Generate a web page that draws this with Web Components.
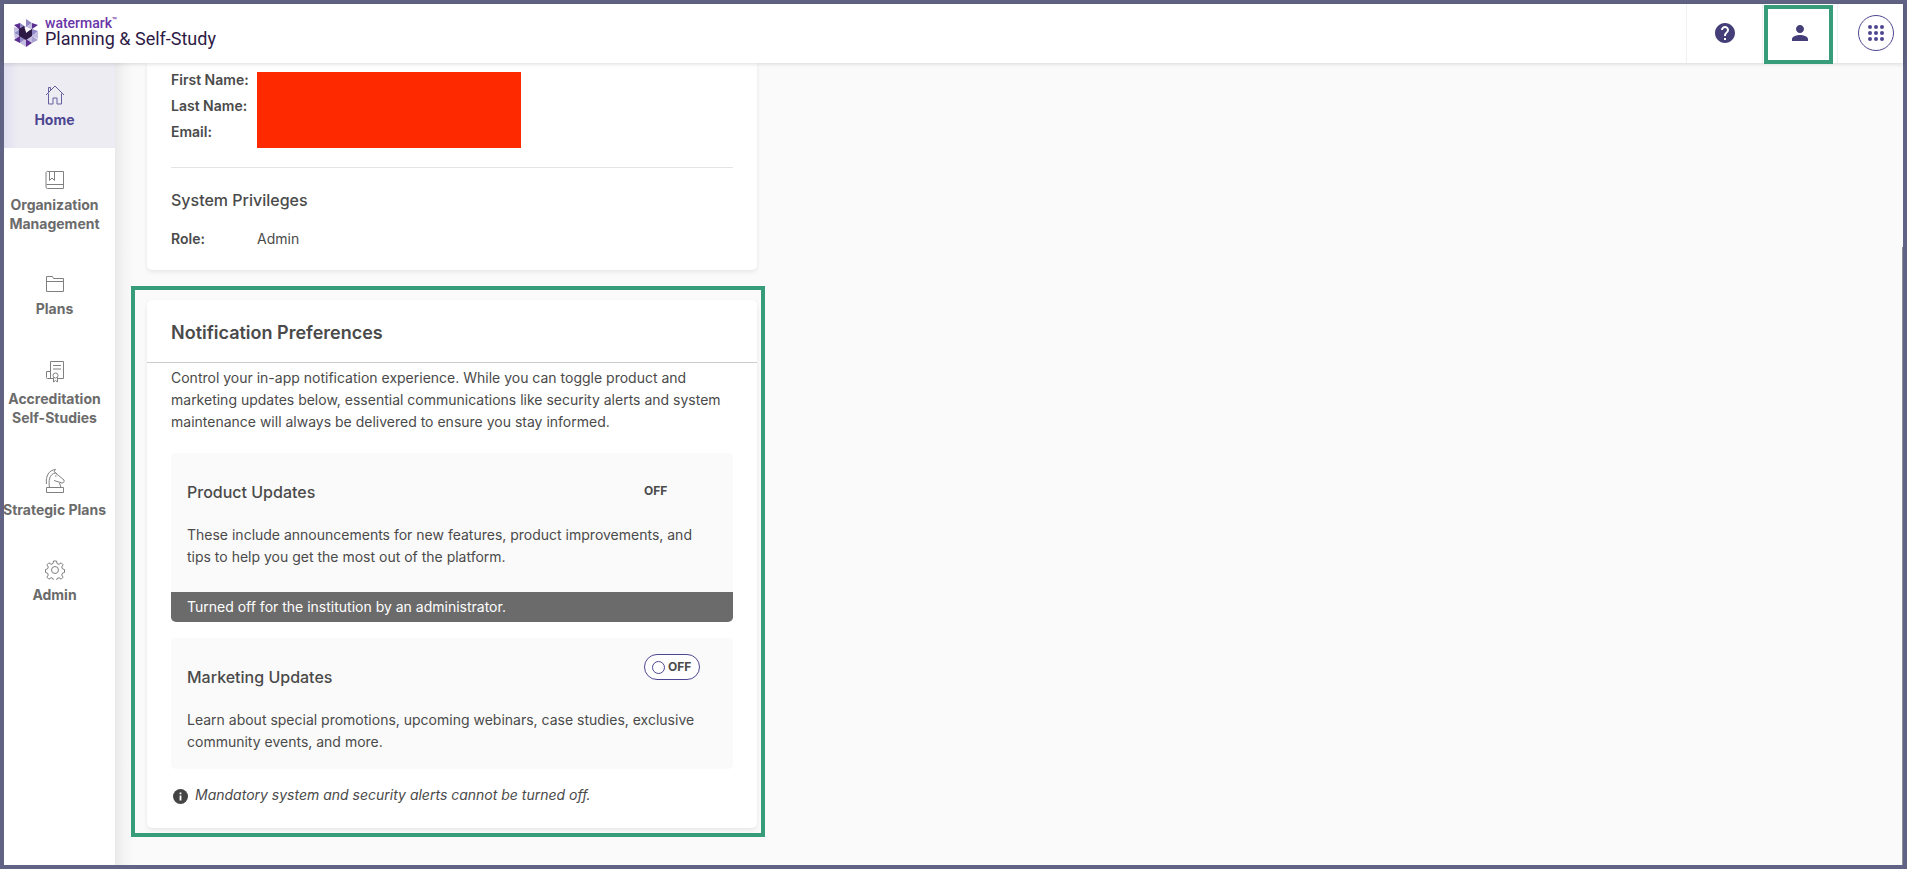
<!DOCTYPE html>
<html lang="en">
<head>
<meta charset="utf-8">
<title>Planning &amp; Self-Study</title>
<style>
  html, body { margin: 0; }
  body {
    font-family: Inter, "Liberation Sans", sans-serif;
    font-size: 14px;
    line-height: 22px;
    color: #4a4a4a;
    background: #fafafa;
    --brand: #4d4791;
    --brand-dark: #443f78;
    --frame: #616384;
    --mark: #379c7a;
  }
</style>
</head>
<body>
<app-shell>
  <top-bar slot="header"></top-bar>
  <side-nav slot="nav">
    <nav-item icon="home" active>Home</nav-item>
    <nav-item icon="book">Organization<br>Management</nav-item>
    <nav-item icon="folder">Plans</nav-item>
    <nav-item icon="award">Accreditation<br>Self-Studies</nav-item>
    <nav-item icon="knight">Strategic Plans</nav-item>
    <nav-item icon="gear">Admin</nav-item>
  </side-nav>
  <profile-card></profile-card>
  <preferences-card heading="Notification Preferences">
    <span slot="intro">Control your in-app notification experience. While you can toggle product and marketing updates below, essential communications like security alerts and system maintenance will always be delivered to ensure you stay informed.</span>
    <preference-panel heading="Product Updates" locked="Turned off for the institution by an administrator.">These include announcements for new features, product improvements, and tips to help you get the most out of the platform.</preference-panel>
    <preference-panel heading="Marketing Updates">Learn about special promotions, upcoming webinars, case studies, exclusive community events, and more.</preference-panel>
    <span slot="note">Mandatory system and security alerts cannot be turned off.</span>
  </preferences-card>
</app-shell>

<script>
const define = (name, render) => customElements.define(name, class extends HTMLElement {
  constructor() {
    super();
    this.attachShadow({ mode: 'open' });
  }
  connectedCallback() {
    this.shadowRoot.innerHTML = '<style>*{box-sizing:border-box}:host{box-sizing:border-box}</style>' + render(this);
  }
});

define('app-shell', () => `
  <style>
    :host { display: flex; flex-direction: column; min-height: 100vh; border: 4px solid var(--frame); }
    .body { display: flex; flex: 1; }
    main { flex: 1; min-width: 0; padding: 0 32px 37px; display: flex; flex-direction: column; gap: 30px;
      background: linear-gradient(90deg, #e9e9e9, #f3f3f3 8px, #fafafa 18px); }
    .thumb { width: 1px; margin-top: 184px; background: #8f8f8f; }
  </style>
  <slot name="header"></slot>
  <div class="body">
    <slot name="nav"></slot>
    <main><slot></slot></main>
    <div class="thumb"></div>
  </div>`);

define('brand-logo', () => `
  <style>
    :host { display: block; }
    a { display: flex; gap: 7px; align-items: center; text-decoration: none; color: #2d1a45; }
    svg { display: block; }
    .words { display: flex; flex-direction: column; font-family: Roboto, sans-serif; }
    .mark { font-size: 14px; line-height: 13px; font-weight: 500; color: #6a35a8; display: flex; }
    .mark small { font-size: 8px; line-height: 8px; }
    .product { font-size: 18px; line-height: 18px; font-weight: 400; }
  </style>
  <a href="#" aria-label="Watermark Planning and Self-Study">
    <svg width="24" height="28" viewBox="0 0 24 28">
      <path fill="#8f88c4" d="M12 0l6 4-6 4zM6 4l6 4-6 3zM0 14l6-4v7zM6 24l6-4-6-3zM24 12l-6-2v7z"/>
      <path fill="#c3bbe0" d="M12 8l6-4v7zM0 14V8l6 2zM0 14l6 3-5 4zM24 12v8l-6-3zM12 20l6-3v7zM12 20v8l-6-4z"/>
      <path fill="#5c2d91" d="M0 6l6-2v7zM18 10V4l6 2zM0 21l6-4v7zM12 20v8l6-4z"/>
      <path fill="#a79fd0" d="M18 17l6 4-6 3z"/>
      <path fill="#2d1a45" d="M5 10l5-3 2 6 6-3v7l-6 4-7-4z"/>
      <path fill="#fff" d="M12 8l5 2-5 4z"/>
    </svg>
    <span class="words">
      <span class="mark">watermark<small>™</small></span>
      <span class="product">Planning &amp; Self-Study</span>
    </span>
  </a>`);

define('top-bar', () => `
  <style>
    :host { display: flex; height: 59px; background: #fff; position: relative; z-index: 1; box-shadow: 0 1px 4px rgba(0,0,0,.14); }
    brand-logo { padding: 13px 0 0 10px; flex: 1; }
    .cell { width: 76px; padding-bottom: 1px; border-left: 1px solid #f0f0f0; display: flex; align-items: center; justify-content: center; position: relative; }
    .cell.user { width: 75px; }
    .cell.user::after { content: ""; position: absolute; inset: 1px 4px -1px 1px; border: 4px solid var(--mark); pointer-events: none; }
    .cell.apps { width: 66px; justify-content: flex-end; padding-right: 9px; }
    button { border: 0; background: none; padding: 0; display: flex; align-items: center; justify-content: center; color: var(--brand-dark); }
    .apps button { width: 36px; height: 36px; border: 1px solid var(--brand); border-radius: 50%; color: var(--brand); }
  </style>
  <brand-logo></brand-logo>
  <div class="cell"><button aria-label="Help">
    <svg width="24" height="24" viewBox="0 0 24 24"><path fill="currentColor" d="M12 2C6.480 2 2 6.480 2 12s4.480 10 10 10 10-4.480 10-10S17.520 2 12 2zm1 17h-2v-2h2v2zm2.070-7.750l-.9.920C13.450 12.900 13 13.500 13 15h-2v-.5c0-1.100.45-2.100 1.170-2.830l1.240-1.260c.37-.36.59-.86.59-1.410 0-1.100-.9-2-2-2s-2 .9-2 2H8c0-2.210 1.790-4 4-4s4 1.790 4 4c0 .88-.36 1.680-.93 2.250z"/></svg>
  </button></div>
  <div class="cell user"><button aria-label="Account">
    <svg width="24" height="24" viewBox="0 0 24 24"><path fill="currentColor" d="M12 12c2.210 0 4-1.790 4-4s-1.790-4-4-4-4 1.790-4 4 1.790 4 4 4zm0 2c-2.670 0-8 1.340-8 4v2h16v-2c0-2.660-5.330-4-8-4z"/></svg>
  </button></div>
  <div class="cell apps"><button aria-label="Apps">
    <svg width="16" height="16" viewBox="0 0 16 16" fill="currentColor">${[2, 8, 14].map(y => [2, 8, 14].map(x => `<circle cx="${x}" cy="${y}" r="2"/>`).join('')).join('')}</svg>
  </button></div>`);

define('side-nav', () => `
  <style>
    :host { display: block; width: 111px; background: #fff; flex: none; }
    nav { display: flex; flex-direction: column; }
  </style>
  <nav aria-label="Main"><slot></slot></nav>`);

const icons = {
  home: [20, '<path d="M1 10L10 1l9 9M3.500 8.500v10.500h4.500v-6h4v6h4.500v-10.500M3.500 7.500v-5h2v3"/>'],
  book: [20, '<path d="M3 1.500h15.500v17H2.500a1.500 1.500 0 0 1-1.500-1.500V3a1.500 1.500 0 0 1 2-1.500M1.500 14.500h17M4.500 1.500v9l2.500-2.500 2.500 2.500v-9"/>'],
  folder: [20, '<path d="M1.500 17.500v-15h6l1 2h10v13zM1.500 7.500h17"/>'],
  award: [25, '<path d="M8 19.500H2.500a1 1 0 0 1-1-1v-6h4M5.500 19.500v-17h13v17H13M8 6.500h8M8 10h8"/><circle cx="10.500" cy="16.500" r="2.500"/><path d="M8.500 18.500v4.500l2-1.500 2 1.500v-4.500"/>'],
  knight: [27, '<path d="M1.500 19.500h17v5h-17zM4.500 19.500C3.500 13 4 6 10.500 5L19 12c.5 2-.5 3-2 3L9 12.500M14.500 15l1.500 4.500M1.500 16C.5 8 4 2 10.500 1.500L9 3.500l3 2.500M10 8h1.500"/>'],
  gear: [20, '<circle cx="10" cy="10" r="3.500"/><path d="M8.500 1h3l.5 2.500 2 .8 2.100-1.500 2 2-1.400 2.200.8 1.900 2 .6v3l-2 .6-.8 1.900 1.400 2.200-2 2-2.100-1.500-2 .8-.5 2.500h-3L8 18.500l-2-.8-2.100 1.500-2-2 1.400-2.200-.8-1.900-2-.6v-3l2-.6.8-1.900L1.900 4.800l2-2L6 4.300l2-.8z"/>']
};

define('nav-item', el => {
  const [h, art] = icons[el.getAttribute('icon')];
  return `
  <style>
    :host { display: block; color: #6b6b6b; }
    :host([active]) { color: var(--brand); background: linear-gradient(90deg, #e1dff0, #edecf3 14px); }
    a { display: flex; flex-direction: column; align-items: center; gap: 5px; padding: 22px 10px 19px 0; color: inherit; text-decoration: none; }
    svg { display: block; fill: none; stroke: currentColor; stroke-width: 1; opacity: .85; }
    span { font-size: 14px; line-height: 19px; font-weight: 700; text-align: center; white-space: nowrap; }
  </style>
  <a href="#"><svg width="20" height="${h}" viewBox="0 0 20 ${h}">${art}</svg><span><slot></slot></span></a>`;
});

define('profile-card', () => `
  <style>
    :host { display: block; width: 610px; max-width: 100%; background: #fff; border-radius: 0 0 5px 5px; padding: 4px 24px 18px; box-shadow: 0 2px 4px rgba(0,0,0,.08); }
    .row { display: grid; grid-template-columns: 86px 1fr; }
    dl, dd, h3 { margin: 0; }
    .info { border-bottom: 1px solid #e4e4e4; padding-bottom: 19px; }
    dt, dd { line-height: 26px; }
    dt { font-weight: 600; }
    .redacted { grid-column: 2; grid-row: 1 / 4; width: 264px; height: 76px; margin-top: 5px; background: #ff2900; }
    .info { grid-template-rows: 26px 26px 29px; }
    h3 { font-size: 16px; line-height: 24px; font-weight: 500; padding: 20px 0 14px; }
  </style>
  <dl class="row info">
    <dt>First Name:</dt><dt>Last Name:</dt><dt>Email:</dt>
    <dd class="redacted" aria-label="Redacted"></dd>
  </dl>
  <h3>System Privileges</h3>
  <dl class="row"><dt>Role:</dt><dd>Admin</dd></dl>`);

define('preferences-card', el => `
  <style>
    :host { display: block; position: relative; width: 610px; max-width: 100%; background: #fff; border-radius: 5px; box-shadow: 0 2px 4px rgba(0,0,0,.08); }
    :host::after { content: ""; position: absolute; inset: -14px -8px -9px -16px; border: 4px solid var(--mark); pointer-events: none; }
    h2 { margin: 0; padding: 21px 24px 17px; font-size: 18px; line-height: 24px; font-weight: 600; border-bottom: 1px solid #ccc; }
    .content { padding: 4px 24px 22px; }
    p { margin: 0; }
    .panels { display: flex; flex-direction: column; gap: 16px; padding: 20px 0 15px; }
    .note { display: flex; align-items: center; gap: 7px; padding-left: 2px; font-style: italic; }
    .note svg { flex: none; margin-top: 2px; }
  </style>
  <h2>${el.getAttribute('heading')}</h2>
  <div class="content">
    <p><slot name="intro"></slot></p>
    <div class="panels"><slot></slot></div>
    <p class="note"><svg width="15" height="15" viewBox="0 0 15 15"><circle cx="7.500" cy="7.500" r="7.500" fill="#444"/><path fill="#fff" d="M6.600 3.500h1.800v1.700H6.600zM6.600 6.400h1.800v5H6.600z"/></svg><slot name="note"></slot></p>
  </div>`);

define('preference-panel', el => {
  const locked = el.getAttribute('locked');
  return `
  <style>
    :host { display: block; background: #fafafa; border-radius: 5px; overflow: hidden; }
    .top { display: grid; grid-template-columns: 1fr 56px; padding: 16px 33px 20px 16px; }
    h3 { margin: 0; padding-top: 11px; font-size: 16px; line-height: 24px; font-weight: 500; }
    .state { font-size: 12px; line-height: 24px; font-weight: 700; }
    .fixed { padding-top: 10px; }
    button { width: 56px; height: 26px; padding: 0 0 0 7px; display: flex; align-items: center; gap: 3px; border: 1px solid var(--brand); border-radius: 13px; background: #fff; color: inherit; font-family: inherit; }
    button i { width: 13px; height: 13px; border: 1px solid var(--brand); border-radius: 50%; }
    p { margin: 0; padding: 0 16px 16px; }
    p.tall { padding-bottom: 24px; }
    .lock { background: #6b6b6b; color: #fff; padding: 4px 16px; }
  </style>
  <div class="top"><h3>${el.getAttribute('heading')}</h3>${locked
    ? '<span class="state fixed">OFF</span>'
    : `<button class="state" role="switch" aria-checked="false" aria-label="${el.getAttribute('heading')}"><i></i>OFF</button>`}</div>
  <p class="${locked ? 'tall' : ''}"><slot></slot></p>
  ${locked ? `<div class="lock">${locked}</div>` : ''}`;
});
</script>
</body>
</html>
